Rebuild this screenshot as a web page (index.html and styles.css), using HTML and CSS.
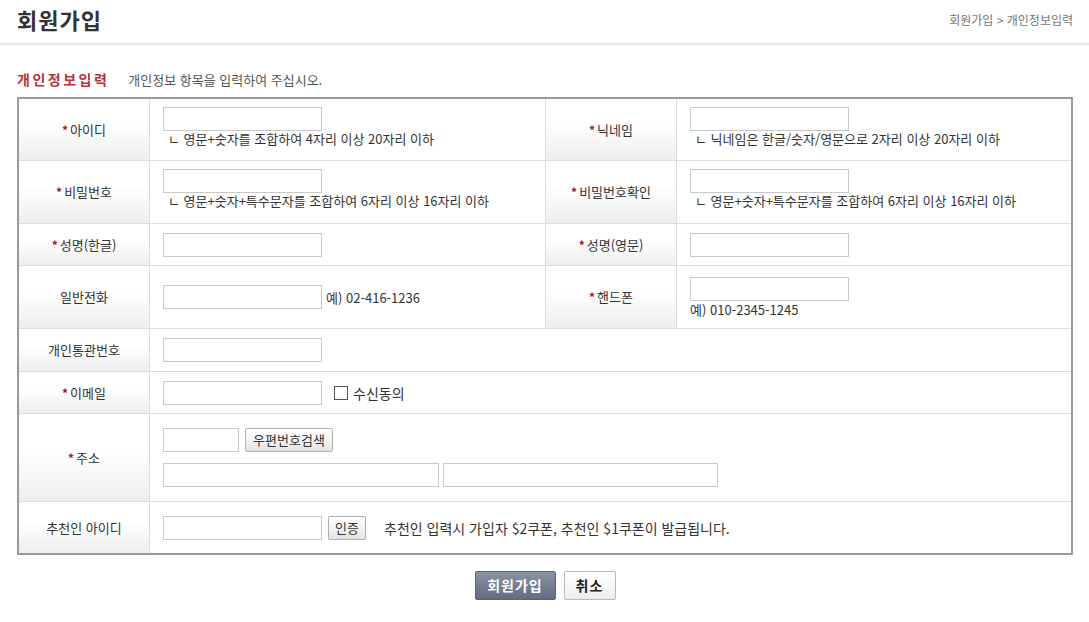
FILE: index.html
```html
<!DOCTYPE html>
<html lang="ko">
<head>
<meta charset="utf-8">
<title>회원가입</title>
<link rel="stylesheet" href="styles.css">
</head>
<body>
<header class="page-head">
  <h1 class="page-title">회원가입</h1>
  <div class="crumb">회원가입 &gt; 개인정보입력</div>
</header>
<main class="content">
  <div class="sec-head">
    <h2 class="sec-title">개인정보입력</h2>
    <span class="sec-desc">개인정보 항목을 입력하여 주십시오.</span>
  </div>
  <div class="form-grid">
    <div class="lbl"><span class="req">*</span>아이디</div>
    <div class="val top sep"><input class="txt" type="text"><p class="hint">ㄴ 영문+숫자를 조합하여 4자리 이상 20자리 이하</p></div>
    <div class="lbl"><span class="req">*</span>닉네임</div>
    <div class="val top"><input class="txt" type="text"><p class="hint">ㄴ 닉네임은 한글/숫자/영문으로 2자리 이상 20자리 이하</p></div>

    <div class="lbl"><span class="req">*</span>비밀번호</div>
    <div class="val top sep"><input class="txt" type="password"><p class="hint">ㄴ 영문+숫자+특수문자를 조합하여 6자리 이상 16자리 이하</p></div>
    <div class="lbl"><span class="req">*</span>비밀번호확인</div>
    <div class="val top"><input class="txt" type="password"><p class="hint">ㄴ 영문+숫자+특수문자를 조합하여 6자리 이상 16자리 이하</p></div>

    <div class="lbl"><span class="req">*</span>성명(한글)</div>
    <div class="val sep"><input class="txt" type="text"></div>
    <div class="lbl"><span class="req">*</span>성명(영문)</div>
    <div class="val"><input class="txt" type="text"></div>

    <div class="lbl">일반전화</div>
    <div class="val inline sep"><input class="txt" type="text"><span class="ex">예) 02-416-1236</span></div>
    <div class="lbl"><span class="req">*</span>핸드폰</div>
    <div class="val"><input class="txt" type="text"><p class="ex2">예) 010-2345-1245</p></div>

    <div class="lbl">개인통관번호</div>
    <div class="val wide"><input class="txt" type="text"></div>

    <div class="lbl"><span class="req">*</span>이메일</div>
    <div class="val wide inline"><input class="txt" type="text"><label class="agree"><input class="chk" type="checkbox"><span>수신동의</span></label></div>

    <div class="lbl"><span class="req">*</span>주소</div>
    <div class="val wide">
      <div class="zip-line"><input class="txt zip" type="text"><button class="sbtn" type="button">우편번호검색</button></div>
      <div class="addr-line"><input class="txt addr1" type="text"><input class="txt addr2" type="text"></div>
    </div>

    <div class="lbl last">추천인 아이디</div>
    <div class="val wide inline last"><input class="txt" type="text"><button class="sbtn auth" type="button">인증</button><span class="notice">추천인 입력시 가입자 $2쿠폰, 추천인 $1쿠폰이 발급됩니다.</span></div>
  </div>
  <div class="actions">
    <button class="btn btn-primary" type="button">회원가입</button>
    <button class="btn btn-cancel" type="button">취소</button>
  </div>
</main>
</body>
</html>
```

FILE: styles.css
```css
* { box-sizing: border-box; }
html, body { margin: 0; padding: 0; background: #fff; }
body {
  font-family: "Noto Sans CJK KR", "Noto Sans", sans-serif;
  font-size: 13px;
  color: #333;
}
.page-head {
  height: 45px;
  border-bottom: 2px solid #e8e8e8;
  padding: 0 16px 4px 17px;
  display: flex;
  align-items: center;
  justify-content: space-between;
}
.page-title {
  margin: 0;
  font-size: 22px;
  font-weight: bold;
  letter-spacing: 1px;
  color: #333;
  line-height: 27px;
}
.crumb {
  font-size: 12px;
  color: #777;
  line-height: 16px;
}
.content {
  padding: 0 16px 0 17px;
}
.sec-head {
  display: flex;
  align-items: baseline;
  margin-top: 25px;
  margin-bottom: 9px;
  height: 18px;
}
.sec-title {
  margin: 0;
  font-size: 14px;
  font-weight: bold;
  letter-spacing: 2.5px;
  color: #b8323a;
  line-height: 18px;
}
.sec-desc {
  margin-left: 19px;
  font-size: 13px;
  color: #555;
  line-height: 18px;
}
.form-grid {
  display: grid;
  grid-template-columns: 131px 396px 131px 1fr;
  grid-template-rows: 62px 63px 42px 63px 43px 42px 88px 51px;
  border: 2px solid #9a9a9a;
}
.lbl {
  display: flex;
  align-items: center;
  justify-content: center;
  background: linear-gradient(to bottom, #ffffff 0%, #ffffff 40%, #eeeeee 100%);
  border-right: 1px solid #dcdcdc;
  border-bottom: 1px solid #dcdcdc;
  font-size: 13px;
  color: #333;
  line-height: 16px;
}
.req {
  color: #a3161f;
  font-weight: bold;
  font-size: 12px;
  margin-right: 2px;
  vertical-align: -3px;
  line-height: 10px;
}
.val {
  display: flex;
  flex-direction: column;
  justify-content: center;
  align-items: flex-start;
  padding-left: 13px;
  border-bottom: 1px solid #dcdcdc;
  background: #fff;
}
.val.top { justify-content: flex-start; padding-top: 8px; }
.val.sep { border-right: 1px solid #dcdcdc; }
.val.wide { grid-column: 2 / 5; }
.val.inline { flex-direction: row; align-items: center; justify-content: flex-start; }
.last { border-bottom: none; }
.txt {
  width: 159px;
  height: 24px;
  border: 1px solid #c9c9c9;
  padding: 0 4px;
  margin: 0;
  font-family: inherit;
  font-size: 12px;
  background: #fff;
  outline: none;
}
.hint {
  margin: 0 0 0 5px;
  font-size: 13px;
  line-height: 16px;
  color: #333;
  white-space: nowrap;
}
.ex {
  margin-left: 4px;
  font-size: 13px;
  color: #333;
  white-space: nowrap;
}
.ex2 {
  margin: 1px 0 0 0;
  font-size: 13px;
  line-height: 15px;
  color: #333;
}
.agree {
  display: flex;
  align-items: center;
  margin-left: 12px;
  font-size: 14px;
  color: #333;
}
.chk {
  -webkit-appearance: none;
  appearance: none;
  width: 14px;
  height: 14px;
  margin: 0 5px 0 0;
  border: 1px solid #555;
  background: #fff;
}
.zip-line { display: flex; align-items: center; gap: 6px; }
.zip { width: 76px; }
.addr-line { display: flex; gap: 4px; margin-top: 11px; }
.addr1 { width: 276px; }
.addr2 { width: 275px; }
.sbtn {
  height: 24px;
  padding: 0 7px;
  margin: 0;
  border: 1px solid #b0b0b0;
  border-radius: 2px;
  background: linear-gradient(to bottom, #ffffff 0%, #f3f3f3 50%, #e3e3e3 100%);
  font-family: inherit;
  font-size: 13px;
  color: #333;
  line-height: 20px;
}
.zip-line .sbtn { width: 88px; padding: 0; }
.auth { margin-left: 6px; width: 38px; padding: 0; }
.notice {
  margin-left: 18px;
  font-size: 14px;
  color: #333;
  white-space: nowrap;
}
.actions {
  display: flex;
  justify-content: center;
  gap: 8px;
  margin-top: 16px;
}
.btn {
  height: 29px;
  margin: 0;
  border-radius: 2px;
  font-family: inherit;
  font-size: 14px;
  font-weight: bold;
  letter-spacing: 1px;
  line-height: 25px;
  padding: 0;
}
.btn-primary {
  width: 81px;
  border: 1px solid #5b6376;
  background: linear-gradient(to bottom, #8c95a7 0%, #737c90 55%, #646d82 100%);
  color: #fff;
}
.btn-cancel {
  width: 52px;
  border: 1px solid #b8b8b8;
  background: linear-gradient(to bottom, #ffffff 0%, #f6f6f6 60%, #ebebeb 100%);
  color: #222;
}
```
